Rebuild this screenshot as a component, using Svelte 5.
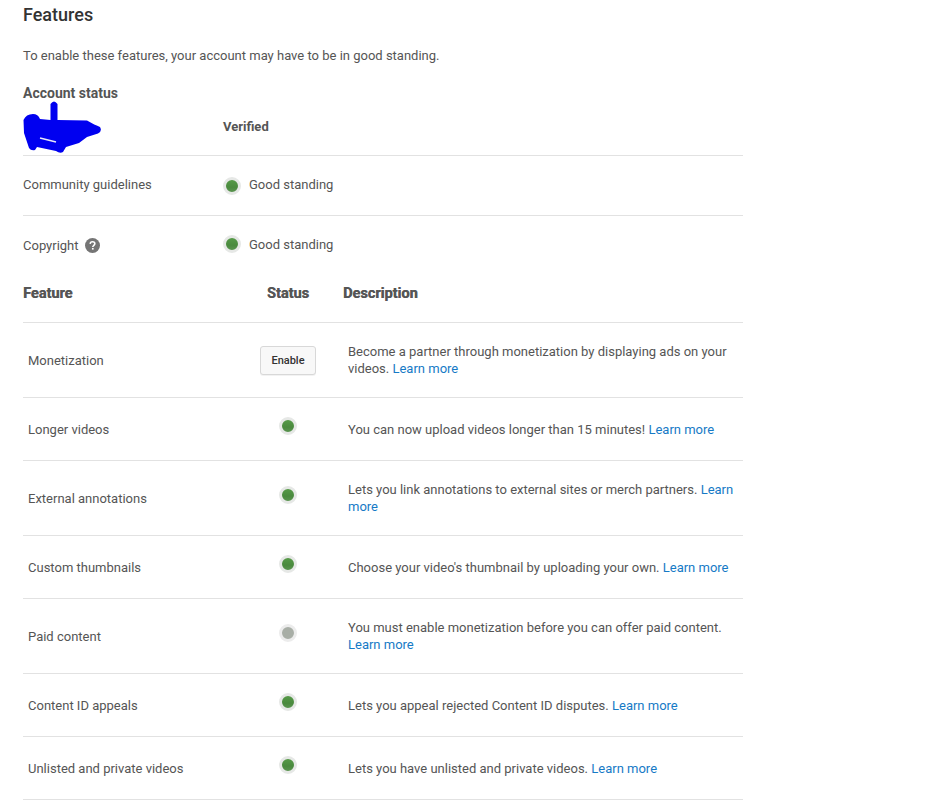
<script lang="ts">
  type Feature = { name: string; on?: boolean; off?: boolean; text: string };

  const features: Feature[] = [
    { name: 'Monetization', text: 'Become a partner through monetization by displaying ads on your videos.' },
    { name: 'Longer videos', on: true, text: 'You can now upload videos longer than 15 minutes!' },
    { name: 'External annotations', on: true, text: 'Lets you link annotations to external sites or merch partners.' },
    { name: 'Custom thumbnails', on: true, text: "Choose your video's thumbnail by uploading your own." },
    { name: 'Paid content', off: true, text: 'You must enable monetization before you can offer paid content.' },
    { name: 'Content ID appeals', on: true, text: 'Lets you appeal rejected Content ID disputes.' },
    { name: 'Unlisted and private videos', on: true, text: 'Lets you have unlisted and private videos.' }
  ];
</script>

<div class="page">
  <h1>Features</h1>
  <p class="intro">To enable these features, your account may have to be in good standing.</p>

  <h2>Account status</h2>
  <div class="status-row account">
    <div class="scribble-cell">
      <svg class="scribble" width="80" height="54" viewBox="0 0 80 54" aria-hidden="true">
        <path
          d="M27.500 4 Q31 -1 34.500 4 L34.500 20 L64 20.500 Q72 25 77 27 Q79.500 31 75 33.500 L64 37 L56 43 L43 47 L40 52 Q37 54 33 51 L14 47 L12 50 Q8 51 6 48 L1 33 L0.500 20 Q3 14 10 14 Q15 14 17 19 L27.500 20 Z"
          fill="#0000f0"
        />
        <path d="M17 38 L33 42" stroke="#e8e8f8" stroke-width="1.500" />
      </svg>
    </div>
    <strong>Verified</strong>
  </div>
  <div class="status-row">
    <span class="label">Community guidelines</span>
    <span class="standing"><i class="dot"></i>Good standing</span>
  </div>
  <div class="status-row last">
    <span class="copyright">
      Copyright
      <svg width="15" height="15" viewBox="0 0 16 16" aria-hidden="true">
        <circle cx="8" cy="8" r="8" fill="#757575" />
        <path d="M5.500 6.300 C5.600 4.700 6.800 4 8 4 C9.500 4 10.500 4.900 10.500 6.200 C10.500 7.700 8.300 7.900 8.300 9.600" fill="none" stroke="#fff" stroke-width="1.700" />
        <rect x="7.400" y="10.600" width="1.800" height="1.800" fill="#fff" />
      </svg>
    </span>
    <span class="standing"><i class="dot"></i>Good standing</span>
  </div>

  <div class="grid head">
    <div>Feature</div>
    <div class="center">Status</div>
    <div>Description</div>
  </div>

  {#each features as f (f.name)}
    <div class="grid row">
      <div class="name">{f.name}</div>
      <div class="center">
        {#if f.on}
          <i class="dot lifted"></i>
        {:else if f.off}
          <i class="dot lifted grey"></i>
        {:else}
          <button type="button">Enable</button>
        {/if}
      </div>
      <div class="desc">{f.text} <a href="#top">Learn more</a></div>
    </div>
  {/each}
</div>

<style>
  :global(body) {
    background: #fff;
  }

  .page {
    width: 720px;
    padding-left: 23px;
    font-family: Roboto, 'Liberation Sans', sans-serif;
    font-size: 13px;
    line-height: 17px;
    color: #555;
  }

  h1 {
    margin: 0;
    padding-top: 4px;
    font-size: 18px;
    line-height: 22px;
    font-weight: 500;
    color: #333;
  }

  .intro {
    margin: 21px 0 0;
  }

  h2 {
    margin: 21px 0 0;
    font-size: 14px;
    line-height: 17px;
    font-weight: 700;
    color: #555;
  }

  .status-row {
    display: grid;
    grid-template-columns: 200px 1fr;
    align-items: center;
    box-sizing: border-box;
    height: 60px;
    border-bottom: 1px solid #e2e2e2;
  }

  .status-row.account {
    height: 54px;
  }

  .status-row.account strong {
    padding-bottom: 5px;
  }

  .status-row.last {
    border-bottom: 0;
    padding-bottom: 4px;
  }

  .scribble-cell {
    height: 53px;
  }

  .scribble {
    display: block;
    margin-top: -2px;
  }

  .label {
    padding-bottom: 2px;
  }

  .standing {
    display: flex;
    align-items: center;
    gap: 8px;
    padding-bottom: 2px;
  }

  .standing .dot {
    margin-top: 2px;
  }

  .last .standing {
    padding-bottom: 0;
  }

  .last .standing .dot {
    margin-top: 0;
  }

  .copyright {
    display: flex;
    align-items: center;
    gap: 6px;
    margin-top: 2px;
  }

  .dot {
    display: inline-block;
    flex: none;
    box-sizing: border-box;
    width: 18px;
    height: 18px;
    border: 3px solid #e6e8e6;
    border-radius: 50%;
    background: linear-gradient(#569a48, #4a8a3e 60%, #5a9450);
  }

  .dot.lifted {
    display: block;
    margin: 0 auto 6px;
  }

  .dot.grey {
    background: #a8aea6;
    border-color: #ececec;
  }

  .grid {
    display: grid;
    grid-template-columns: 210px 110px 1fr;
    align-items: center;
    border-bottom: 1px solid #e2e2e2;
  }

  .head {
    height: 47px;
    align-items: start;
    margin-top: -1px;
    font-size: 14.5px;
    font-weight: 700;
    text-shadow: 0.4px 0 0 #666;
  }

  .head > div {
    padding-top: 10px;
  }

  .center {
    text-align: center;
  }

  .row {
    min-height: 62px;
  }

  .name {
    padding-left: 5px;
  }

  .desc {
    padding: 20px 5px;
  }

  a {
    color: #167ac6;
    text-decoration: none;
  }

  button {
    display: inline-block;
    width: 56px;
    height: 29px;
    padding: 0;
    margin-top: 1px;
    border: 1px solid #d8d8d8;
    border-radius: 3px;
    background: #f8f8f8;
    box-shadow: 0 1px 0 rgba(0, 0, 0, 0.05);
    font-family: inherit;
    font-size: 11px;
    font-weight: 500;
    color: #333;
  }
</style>
